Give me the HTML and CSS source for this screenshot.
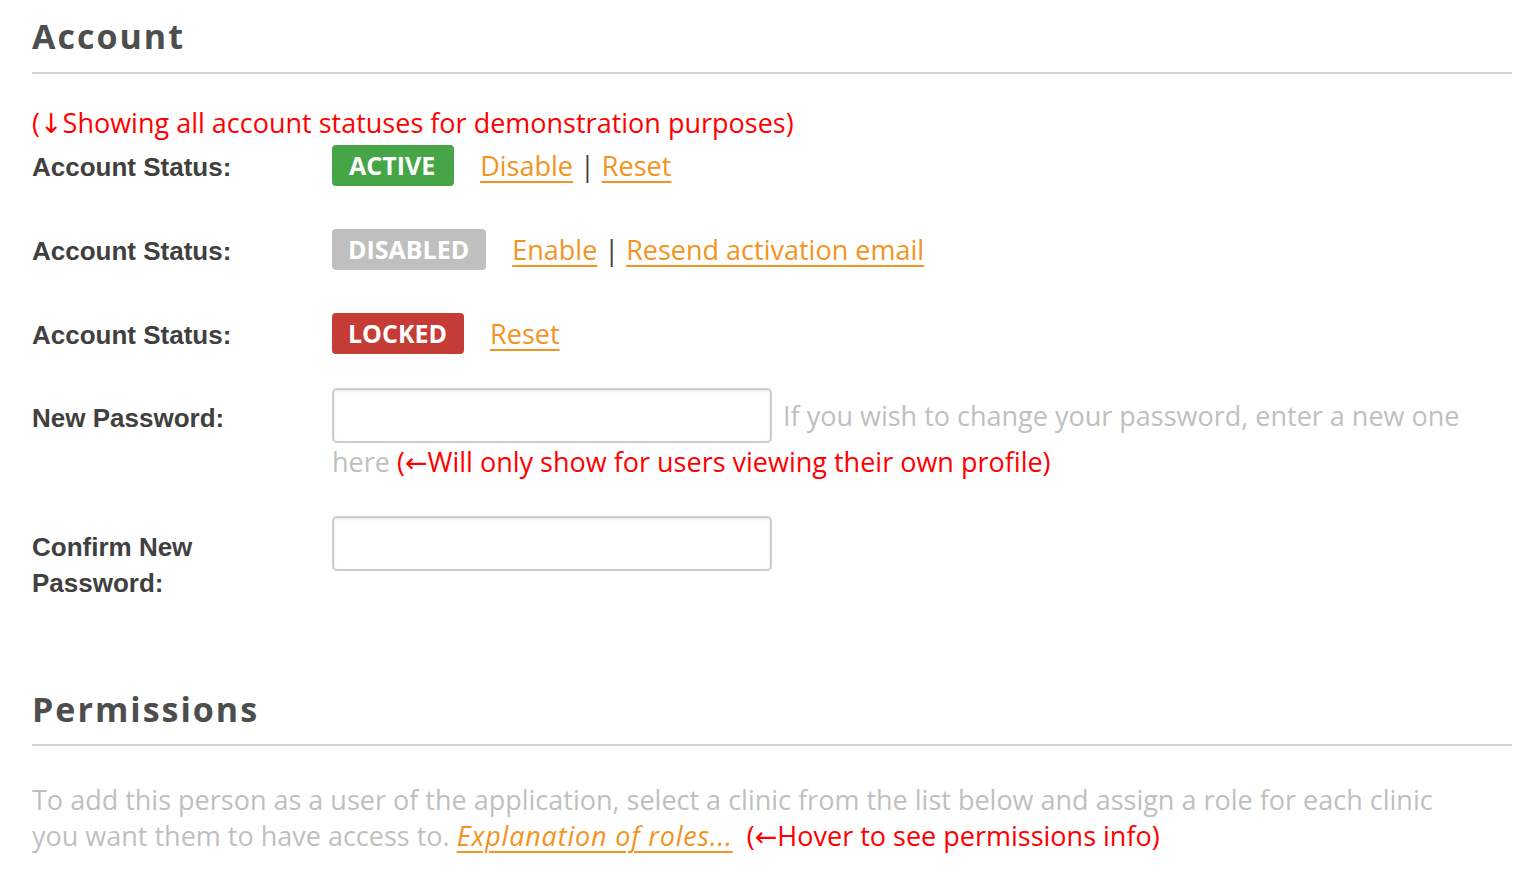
FILE: index.html
```html
<!DOCTYPE html>
<html>
<head>
<meta charset="utf-8">
<link rel="stylesheet" href="styles.css">
</head>
<body>
<div class="page">
  <section class="section">
    <h2 class="heading">Account</h2>
    <div class="note note-top">(↓Showing all account statuses for demonstration purposes)</div>
    <div class="row">
      <div class="label">Account Status:</div>
      <div class="value">
        <span class="badge badge-active">ACTIVE</span>
        <span class="links"><a class="link" href="#">Disable</a> <span class="sep">|</span> <a class="link" href="#">Reset</a></span>
      </div>
    </div>
    <div class="row">
      <div class="label">Account Status:</div>
      <div class="value">
        <span class="badge badge-disabled">DISABLED</span>
        <span class="links"><a class="link" href="#">Enable</a> <span class="sep">|</span> <a class="link" href="#">Resend activation email</a></span>
      </div>
    </div>
    <div class="row row-last">
      <div class="label">Account Status:</div>
      <div class="value">
        <span class="badge badge-locked">LOCKED</span>
        <span class="links"><a class="link" href="#">Reset</a></span>
      </div>
    </div>
    <div class="row row-field">
      <div class="label">New Password:</div>
      <div class="value-text">
        <input class="input" type="password"> <span class="help">If you wish to change your password, enter a new one here</span> <span class="note">(←Will only show for users viewing their own profile)</span>
      </div>
    </div>
    <div class="row row-field row-confirm">
      <div class="label">Confirm New Password:</div>
      <div class="value-text">
        <input class="input" type="password">
      </div>
    </div>
  </section>
  <section class="section section-perm">
    <h2 class="heading">Permissions</h2>
    <p class="para">To add this person as a user of the application, select a clinic from the list below and assign a role for each clinic you want them to have access to. <a class="link link-italic" href="#">Explanation of roles...</a> &nbsp;<span class="note">(←Hover to see permissions info)</span></p>
  </section>
</div>
</body>
</html>
```

FILE: styles.css
```css
html, body {
  margin: 0;
  padding: 0;
  background: #ffffff;
}
.page {
  padding: 0 14px 0 32px;
  font-family: "Open Sans", "DejaVu Sans", sans-serif;
  font-size: 27px;
  color: #404040;
}
.heading {
  margin: 0;
  padding-top: 14px;
  padding-bottom: 14px;
  font-size: 34px;
  line-height: 44px;
  font-weight: 700;
  letter-spacing: 2px;
  color: #4d4d4d;
  border-bottom: 2px solid #d4d4d4;
}
.note {
  color: #ff0000;
}
.note-top {
  margin-top: 31px;
  line-height: 36px;
}
.row {
  display: flex;
  align-items: flex-start;
  min-height: 84px;
}
.row-last {
  min-height: 85px;
}
.label {
  width: 280px;
  margin-right: 20px;
  flex: none;
  font-family: "Liberation Sans", Arial, sans-serif;
  font-weight: 700;
  font-size: 26px;
  line-height: 36px;
  color: #404040;
  padding-top: 8px;
}
.value {
  display: flex;
  align-items: center;
  gap: 26px;
  margin-top: 4px;
  line-height: 41px;
}
.badge {
  display: inline-block;
  height: 41px;
  line-height: 41px;
  padding: 0 17px 0 16px;
  border-radius: 4px;
  color: #ffffff;
  font-weight: 700;
  font-size: 25px;
}
.badge-active {
  background: #46a546;
  padding: 0 19px 0 17px;
}
.badge-disabled { background: #bfbfbf; }
.badge-locked { background: #c43c35; }
.link {
  color: #f39322;
  text-decoration: underline;
  text-underline-offset: 5px;
  text-decoration-thickness: 2px;
}
.sep {
  color: #404040;
}
.value-text {
  flex: 1;
  line-height: 38px;
}
.input {
  width: 440px;
  height: 55px;
  box-sizing: border-box;
  border: 2px solid #cccccc;
  border-radius: 5px;
  box-shadow: inset 0 1px 3px rgba(0,0,0,0.1);
  vertical-align: middle;
  margin: -6px 4px 0 0;
  font-size: 24px;
}
.help {
  color: #bfbfbf;
}
.row-field {
  min-height: 128px;
}
.row-field .label {
  padding-top: 6px;
}
.row-confirm {
  min-height: 151px;
}
.row-confirm .label {
  padding-top: 7px;
}
.section-perm .heading {
  padding-top: 14px;
  padding-bottom: 13px;
}
.para {
  margin: 36px 0 0;
  max-width: 1440px;
  color: #bfbfbf;
  line-height: 36px;
}
.link-italic {
  font-style: italic;
  letter-spacing: 0.8px;
}
```
